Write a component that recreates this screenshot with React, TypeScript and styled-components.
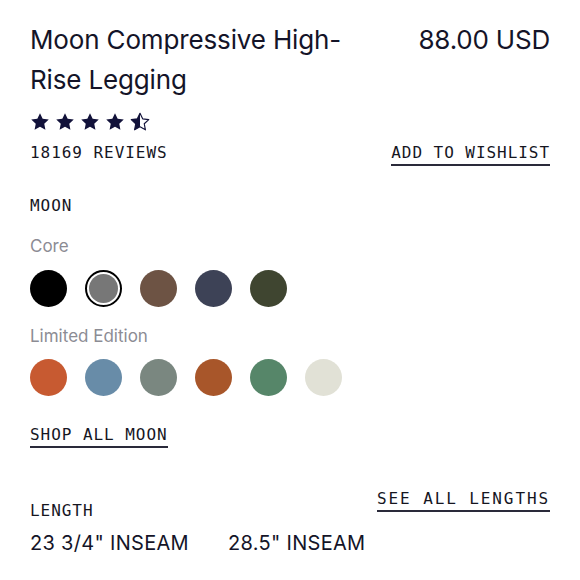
import styled, { createGlobalStyle } from "styled-components";

const GlobalStyle = createGlobalStyle`
  body {
    margin: 0;
    background: #fff;
    color: #141428;
  }
`;

const Page = styled.div`
  padding: 20px 30px 0;
  font-family: Inter, "Liberation Sans", sans-serif;
`;

const Header = styled.div`
  display: flex;
  justify-content: space-between;
  align-items: flex-start;
`;

const Title = styled.h1`
  margin: 0;
  width: 350px;
  font-size: 26px;
  font-weight: 400;
  line-height: 40px;
  letter-spacing: -0.15px;
`;

const Price = styled.div`
  font-size: 26px;
  line-height: 40px;
  letter-spacing: -0.2px;
`;

const Stars = styled.div`
  display: flex;
  gap: 5px;
  margin-top: 12px;
  height: 20px;
`;

const Mono = styled.div<{ $spacing?: number }>`
  font-family: "DejaVu Sans Mono", "Liberation Mono", monospace;
  font-size: 16px;
  line-height: 20px;
  letter-spacing: ${(p) => p.$spacing ?? 0.95}px;
  color: #16161f;
`;

const ReviewRow = styled.div`
  display: flex;
  justify-content: space-between;
  margin-top: 11px;
`;

const Link = styled(Mono)`
  padding-bottom: 1px;
  border-bottom: 2px solid #2a2a3a;
  height: 20px;
`;

const InlineLink = styled(Link)`
  display: inline-block;
  margin-top: 29px;
`;

const Label = styled(Mono)<{ $top: number }>`
  margin-top: ${(p) => p.$top}px;
`;

const Group = styled.div<{ $top: number }>`
  margin-top: ${(p) => p.$top}px;
  font-size: 17px;
  line-height: 20px;
  color: #8c8c94;
`;

const Swatches = styled.div<{ $top: number }>`
  display: flex;
  gap: 18px;
  margin-top: ${(p) => p.$top}px;
`;

const Swatch = styled.div<{ $color: string; $selected?: boolean }>`
  width: 37px;
  height: 37px;
  border-radius: 50%;
  box-sizing: border-box;
  background: ${(p) => p.$color};
  background-clip: content-box;
  ${(p) =>
    p.$selected &&
    `
    border: 2px solid #000;
    padding: 2px;
  `}
`;

const LengthRow = styled.div`
  display: flex;
  justify-content: space-between;
  align-items: flex-start;
  margin-top: 41px;
`;

const LengthLabel = styled(Mono)`
  margin-top: 12px;
`;

const Inseams = styled.div`
  display: flex;
  gap: 39px;
  margin-top: 10px;
  font-size: 20px;
  line-height: 24px;
  letter-spacing: 0.3px;
`;

const STAR =
  "M12 1.5l3.2 6.7 7.3.9-5.4 5 1.4 7.3L12 17.8l-6.5 3.6 1.4-7.3-5.4-5 7.3-.9z";

const Star = ({ half }: { half?: boolean }) => (
  <svg width="20" height="20" viewBox="0 0 24 24">
    <defs>
      <clipPath id="halfclip">
        <rect x="0" y="0" width="12" height="24" />
      </clipPath>
    </defs>
    {half ? (
      <>
        <path d={STAR} fill="none" stroke="#12123a" strokeWidth="1.4" strokeLinejoin="round" />
        <path d={STAR} fill="#12123a" clipPath="url(#halfclip)" />
      </>
    ) : (
      <path d={STAR} fill="#12123a" />
    )}
  </svg>
);

const core = ["#000000", "#777777", "#6d5344", "#3d4256", "#3f4530"];
const limited = ["#c75a31", "#688ca8", "#7a8780", "#a8562a", "#568669", "#e1e1d6"];

export default function App() {
  return (
    <Page>
      <GlobalStyle />
      <Header>
        <Title>Moon Compressive High-Rise Legging</Title>
        <Price>88.00 USD</Price>
      </Header>
      <Stars>
        <Star />
        <Star />
        <Star />
        <Star />
        <Star half />
      </Stars>
      <ReviewRow>
        <Mono>18169 REVIEWS</Mono>
        <Link>ADD TO WISHLIST</Link>
      </ReviewRow>
      <Label $top={30}>MOON</Label>
      <Group $top={20}>Core</Group>
      <Swatches $top={14}>
        {core.map((c, i) => (
          <Swatch key={c} $color={c} $selected={i === 1} />
        ))}
      </Swatches>
      <Group $top={19}>Limited Edition</Group>
      <Swatches $top={13}>
        {limited.map((c) => (
          <Swatch key={c} $color={c} />
        ))}
      </Swatches>
      <InlineLink>SHOP ALL MOON</InlineLink>
      <LengthRow>
        <LengthLabel>LENGTH</LengthLabel>
        <Link $spacing={1.9}>SEE ALL LENGTHS</Link>
      </LengthRow>
      <Inseams>
        <span>23 3/4" INSEAM</span>
        <span>28.5" INSEAM</span>
      </Inseams>
    </Page>
  );
}
